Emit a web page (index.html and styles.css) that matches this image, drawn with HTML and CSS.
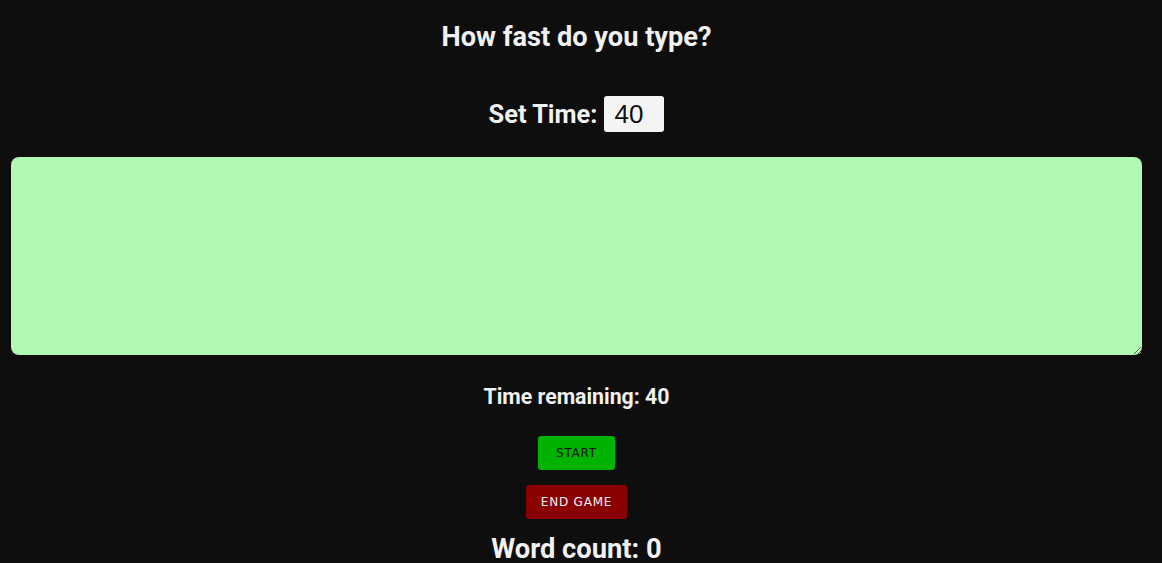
FILE: index.html
```html
<!DOCTYPE html>
<html>
<head>
<meta charset="utf-8">
<link rel="stylesheet" href="styles.css">
</head>
<body>
<div class="app">
  <h1 class="title">How fast do you type?</h1>
  <div class="set-time">
    <label class="set-label" for="t">Set Time:</label>
    <input class="time-input" id="t" type="text" value="40">
  </div>
  <textarea class="typing-area"></textarea>
  <h4 class="remaining">Time remaining: 40</h4>
  <button class="btn btn-start">START</button>
  <button class="btn btn-end">END GAME</button>
  <h1 class="count">Word count: 0</h1>
</div>
</body>
</html>
```
FILE: styles.css
```css
html, body {
  margin: 0;
  padding: 0;
  background: #0e0e0e;
  height: 100%;
  overflow: hidden;
}
.app {
  display: flex;
  flex-direction: column;
  align-items: center;
  padding: 0 20px 0 11px;
  font-family: Roboto, "Liberation Sans", sans-serif;
  color: #f1f1f1;
}
.title {
  margin: 20px 0 0;
  font-size: 27.2px;
  font-weight: 700;
  line-height: 34px;
}
.set-time {
  margin-top: 42px;
  display: flex;
  align-items: center;
  gap: 7px;
}
.set-label {
  font-size: 25.4px;
  font-weight: 700;
}
.time-input {
  width: 60px;
  height: 36px;
  box-sizing: border-box;
  border: none;
  border-radius: 3px;
  background: #f4f4f4;
  font-family: "Liberation Sans", Arial, sans-serif;
  font-size: 26px;
  padding: 0 10px;
  color: #111;
  outline: none;
}
.typing-area {
  margin-top: 25px;
  width: 1131px;
  height: 198px;
  box-sizing: border-box;
  align-self: flex-start;
  border: none;
  border-radius: 8px;
  background: #b2f9b2;
  outline: none;
}
.remaining {
  margin: 29px 0 0;
  font-size: 21.3px;
  font-weight: 700;
  line-height: 26px;
}
.btn {
  border: none;
  border-radius: 3px;
  height: 34px;
  padding: 0;
  font-family: "DejaVu Sans", sans-serif;
  font-size: 12px;
  letter-spacing: 0.8px;
  cursor: pointer;
}
.btn-start {
  margin-top: 26px;
  width: 77px;
  background: #00b300;
  color: #111;
}
.btn-end {
  margin-top: 15px;
  width: 101px;
  background: #8b0000;
  color: #f2f2f2;
}
.count {
  margin: 14px 0 0;
  font-size: 27.3px;
  font-weight: 700;
  line-height: 32px;
}
```
